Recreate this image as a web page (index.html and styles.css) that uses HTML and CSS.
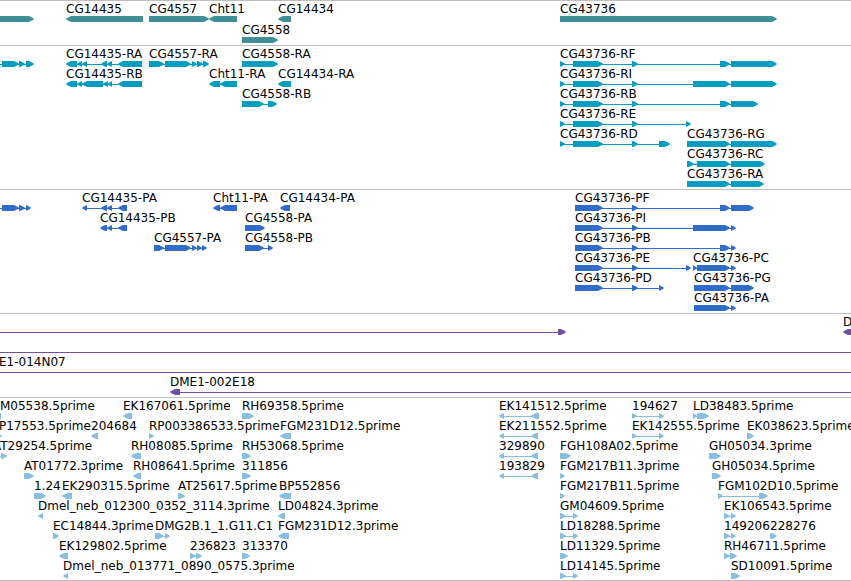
FILE: index.html
```html
<!DOCTYPE html>
<html lang="en">
<head>
<meta charset="utf-8">
<title>Genome browser</title>
<link rel="stylesheet" href="styles.css">
</head>
<body>
<main class="browser" id="browser"></main>
<script src="tracks.js"></script>
</body>
</html>
```
FILE: styles.css
```css
* {
  box-sizing: border-box;
}

body {
  margin: 0;
  background: #fff;
  color: #000;
  font-family: "DejaVu Sans", sans-serif;
  font-size: 12px;
  line-height: 14px;
}

.browser {
  display: flex;
  flex-direction: column;
  overflow: hidden;
}

.track {
  display: flex;
  flex-direction: column;
  border-top: 1px solid #bfbfbf;
  padding: 1px 0 2px;
}

.track:last-child {
  border-bottom: 1px solid #bfbfbf;
  padding-bottom: 1px;
}

.track-genes {
  color: #408f96;
  gap: 1px;
}

.track-transcripts {
  color: #009dbf;
}

.track-proteins {
  color: #306dcb;
}

.track-clones {
  color: #714fa3;
}

.track-ests {
  color: #88bfde;
}

.lane {
  position: relative;
  height: 20px;
}

/* Features sit at their genomic coordinate along the lane. */
.feature {
  position: absolute;
  top: 0;
  display: flex;
  flex-direction: column;
}

.label {
  height: 14px;
  color: #000;
  white-space: nowrap;
}

.glyph {
  display: block;
  height: 6px;
  fill: currentColor;
  overflow: visible;
}
```
FILE: tracks.js
```js
// Feature: [label, strand, [exon start, exon end, ...], optional label start, optional span end]
const tracks = [
  { name: "genes", lanes: [
    [["", 1, [-20, 34]], ["CG14435", -1, [66, 143]], ["CG4557", 1, [149, 209]], ["Cht11", -1, [209, 237]],
     ["CG14434", -1, [278, 291]], ["CG43736", 1, [560, 777]]],
    [["CG4558", 1, [242, 278]]]
  ]},
  { name: "transcripts", lanes: [
    [["", 1, [-20, -10, 2, 19, 19, 25, 26, 34]],
     ["CG14435-RA", -1, [66, 77, 77, 82, 82, 87, 101, 107, 107, 112, 118, 142]],
     ["CG4557-RA", 1, [149, 164, 165, 191, 192, 197, 197, 203, 203, 209]],
     ["CG4558-RA", 1, [242, 278]],
     ["CG43736-RF", 1, [560, 565, 573, 603, 632, 638, 720, 730, 731, 777]]],
    [["CG14435-RB", -1, [66, 77, 77, 82, 82, 103, 103, 108, 108, 112, 118, 142]],
     ["Cht11-RA", -1, [209, 220, 220, 237]], ["CG14434-RA", -1, [278, 291]],
     ["CG43736-RI", 1, [560, 565, 573, 603, 632, 638, 693, 730, 731, 777]]],
    [["CG4558-RB", 1, [242, 264, 268, 277]],
     ["CG43736-RB", 1, [560, 565, 573, 603, 632, 638, 720, 730, 731, 758]]],
    [["CG43736-RE", 1, [560, 565, 573, 603, 632, 638, 686, 691]]],
    [["CG43736-RD", 1, [560, 565, 573, 603, 632, 638, 659, 670]],
     ["CG43736-RG", 1, [687, 730, 731, 777]]],
    [["CG43736-RC", 1, [687, 694, 697, 730, 731, 765]]],
    [["CG43736-RA", 1, [687, 730, 731, 764]]]
  ]},
  { name: "proteins", lanes: [
    [["", 1, [-20, -10, 2, 19, 19, 25, 26, 31]],
     ["CG14435-PA", -1, [82, 87, 101, 107, 107, 112, 118, 127]],
     ["Cht11-PA", -1, [213, 220, 220, 237]], ["CG14434-PA", -1, [280, 290]],
     ["CG43736-PF", 1, [575, 603, 632, 638, 720, 730, 731, 754]]],
    [["CG14435-PB", -1, [100, 107, 107, 112, 118, 127]], ["CG4558-PA", 1, [245, 265]],
     ["CG43736-PI", 1, [575, 603, 632, 638, 693, 730, 731, 736]]],
    [["CG4557-PA", 1, [154, 164, 165, 191, 192, 197, 197, 202, 202, 207]],
     ["CG4558-PB", 1, [245, 264, 268, 273]],
     ["CG43736-PB", 1, [575, 603, 632, 638, 720, 730, 731, 736]]],
    [["CG43736-PE", 1, [575, 603, 632, 638, 686, 691]],
     ["CG43736-PC", 1, [693, 697, 697, 730, 731, 736]]],
    [["CG43736-PD", 1, [575, 603, 632, 638, 659, 664]], ["CG43736-PG", 1, [694, 730, 731, 754]]],
    [["CG43736-PA", 1, [694, 730, 731, 736]]]
  ]},
  { name: "clones", lanes: [
    [["", 1, [-20, -10, 558, 566]], ["D", -1, [843, 853]]],
    [["", 1, [-20, -10], -20, 4000]],
    [["E1-014N07", 1, [-20, -10], -1, 4000]],
    [["DME1-002E18", -1, [170, 180], 170, 4000]]
  ]},
  { name: "ests", lanes: [
    [["M05538.5prime", -1, [-5, 1], 0], ["EK167061.5prime", -1, [123, 132]], ["RH69358.5prime", 1, [242, 254]],
     ["EK141512.5prime", -1, [499, 504, 531, 539]], ["194627", 1, [632, 637, 659, 664]],
     ["LD38483.5prime", 1, [693, 697, 697, 709]]],
    [["P17553.5prime", 1, [-5, 2], -1], ["204684", -1, [91, 98]], ["RP003386533.5prime", 1, [149, 154]],
     ["FGM231D12.5prime", -1, [280, 291]], ["EK211552.5prime", -1, [499, 504, 531, 538]],
     ["EK142555.5prime", 1, [632, 637, 659, 664]], ["EK038623.5prime", 1, [747, 754]]],
    [["AT29254.5prime", 1, [-8, 0, 1, 7], -7], ["RH08085.5prime", -1, [131, 141]], ["RH53068.5prime", 1, [242, 251]],
     ["329890", -1, [499, 504, 531, 538]], ["FGH108A02.5prime", 1, [560, 571]], ["GH05034.3prime", 1, [709, 721]]],
    [["AT01772.3prime", 1, [24, 34]], ["RH08641.5prime", -1, [133, 141]], ["311856", 1, [242, 251]],
     ["193829", -1, [499, 504, 531, 538]], ["FGM217B11.3prime", 1, [560, 565]], ["GH05034.5prime", 1, [712, 721]]],
    [["1.24", 1, [34, 46]], ["EK290315.5prime", -1, [62, 72]], ["AT25617.5prime", 1, [178, 185]],
     ["BP552856", -1, [279, 291]], ["FGM217B11.5prime", 1, [560, 565]],
     ["FGM102D10.5prime", 1, [718, 723, 759, 768]]],
    [["Dmel_neb_012300_0352_3114.3prime", -1, [38, 43]], ["LD04824.3prime", -1, [278, 285]],
     ["GM04609.5prime", 1, [560, 566, 573, 578]], ["EK106543.5prime", 1, [724, 730, 731, 736]]],
    [["EC14844.3prime", 1, [53, 59]], ["DMG2B.1_1.G11.C1", 1, [155, 164, 165, 170]],
     ["FGM231D12.3prime", -1, [278, 289]], ["LD18288.5prime", 1, [560, 566, 573, 578]],
     ["149206", 1, [724, 730, 731, 736]], ["228276", 1, [770, 777]]],
    [["EK129802.5prime", -1, [59, 68]], ["236823", 1, [190, 196, 196, 202]], ["313370", 1, [242, 250]],
     ["LD11329.5prime", 1, [560, 568]], ["RH46711.5prime", 1, [724, 730, 730, 737]]],
    [["Dmel_neb_013771_0890_0575.3prime", -1, [63, 68]], ["LD14145.5prime", 1, [560, 566, 573, 578]],
     ["SD10091.5prime", 1, [731, 740]]]
  ]}
];

const TIP = 5;

// An exon is a bar with a blunt pointed end on the side of its strand.
function exonPath(start, end, strand) {
  const tip = Math.min(TIP, end - start);
  const [tail, head] = strand > 0 ? [start, end] : [end, start];
  const neck = head - strand * tip;
  const nose = head - strand;
  return `M${tail} 0H${neck}L${nose} 2L${head} 3L${nose} 4L${neck} 6H${tail}Z`;
}

function drawFeature([label, strand, exons, labelStart = exons[0], spanEnd = exons[exons.length - 1]]) {
  let path = "";
  for (let i = 0; i < exons.length; i += 2) {
    path += exonPath(exons[i] - labelStart, exons[i + 1] - labelStart, strand);
  }
  const from = exons[0] - labelStart;
  const intron = exons.length > 2 || spanEnd > exons[1]
    ? `<rect x="${from + 1}" y="3" width="${spanEnd - exons[0] - 2}" height="1"/>` : "";
  return `<div class="feature" style="left:${labelStart}px">` +
    `<span class="label">${label}</span>` +
    `<svg class="glyph" width="1" height="6" aria-hidden="true">${intron}<path d="${path}"/></svg></div>`;
}

document.getElementById("browser").innerHTML = tracks.map(track =>
  `<section class="track track-${track.name}">` +
  track.lanes.map(lane => `<div class="lane">${lane.map(drawFeature).join("")}</div>`).join("") +
  `</section>`).join("");
```
